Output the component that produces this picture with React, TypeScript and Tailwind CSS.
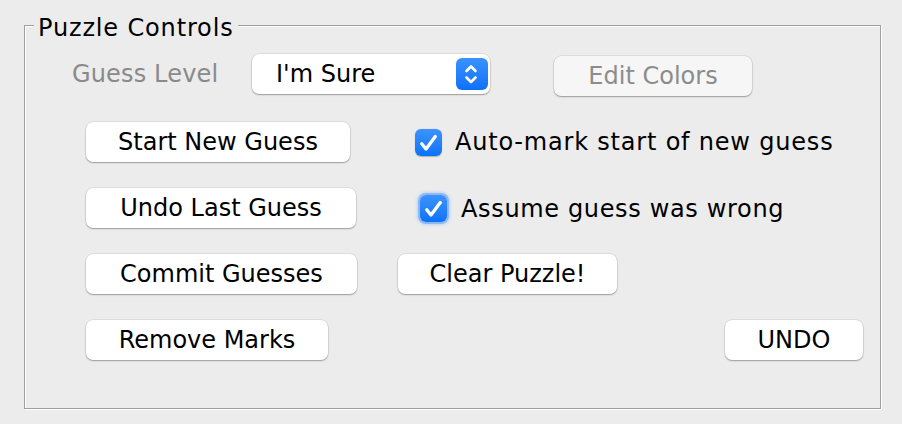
import React from "react";

const font = {fontFamily: '"DejaVu Sans", "Liberation Sans", sans-serif'};

// Aqua-style push button
const MacButton: React.FC<{label: string; className?: string; disabled?: boolean}> = ({label, className = "", disabled}) => (
    <button
        className={`h-[40px] rounded-[7px] text-[24px] leading-none flex items-center justify-center shadow-[0_1px_1.5px_rgba(0,0,0,0.3),0_0_0_0.5px_rgba(0,0,0,0.12)] ${
            disabled ? "bg-[#f6f6f6] text-[#8c8c8c] shadow-[0_0.5px_1px_rgba(0,0,0,0.15),0_0_0_0.5px_rgba(0,0,0,0.06)]" : "bg-white text-black"
        } ${className}`}
    >
        {label}
    </button>
);

const CheckBox: React.FC<{focused?: boolean}> = ({focused}) => (
    <span
        className={`w-[27px] h-[27px] rounded-[6px] bg-gradient-to-b from-[#3b93fd] to-[#0a72f8] flex items-center justify-center shrink-0 ${
            focused ? "shadow-[0_0_0_2px_rgba(98,160,250,0.55),0_0_3px_3px_rgba(98,160,250,0.35)]" : "shadow-[0_0.5px_1px_rgba(0,0,0,0.25)]"
        }`}
    >
        <svg width="27" height="27" viewBox="0 0 27 27">
            <path d="M6.8 14.8 L11 20 L20.3 7.6" fill="none" stroke="white" strokeWidth="3.3" strokeLinecap="round" strokeLinejoin="round"/>
        </svg>
    </span>
);

export default function App() {
    return (
        <div className="w-[902px] h-[424px] bg-[#ececec] pt-[25px] pl-[24px]" style={font}>
            <div className="relative w-[857px] h-[384px] border border-[#9f9f9f] shadow-[inset_1px_1px_0_#ffffff,1px_1px_0_#ffffff]">
                {/* titled border legend */}
                <span className="absolute left-[9px] top-[-12px] px-[4px] bg-[#ececec] text-[24px] leading-[28px] tracking-[0.85px] text-black">
                    Puzzle Controls
                </span>

                <div className="flex flex-col pt-[28px] pl-[61px] pr-[17px]">
                    {/* guess level row */}
                    <div className="flex items-start h-[40px]">
                        <span className="ml-[-14px] w-[180px] h-[40px] flex items-center text-[24px] tracking-[0.15px] text-[#8a8a8a]">Guess Level</span>
                        <div className="w-[238px] h-[40px] rounded-[7px] bg-white shadow-[0_1px_1.5px_rgba(0,0,0,0.3),0_0_0_0.5px_rgba(0,0,0,0.12)] flex items-center justify-between pl-[24px] pr-[2px]">
                            <span className="text-[24px] text-black">I'm Sure</span>
                            <span className="w-[32px] h-[32px] rounded-[6px] bg-gradient-to-b from-[#3a92fd] to-[#0b71f8] flex items-center justify-center">
                                <svg width="32" height="32" viewBox="0 0 32 32">
                                    <path d="M10.5 13 L15 8.5 L19.5 13" fill="none" stroke="white" strokeWidth="2.6" strokeLinecap="round" strokeLinejoin="round"/>
                                    <path d="M10.5 19.5 L15 24 L19.5 19.5" fill="none" stroke="white" strokeWidth="2.6" strokeLinecap="round" strokeLinejoin="round"/>
                                </svg>
                            </span>
                        </div>
                        <MacButton label="Edit Colors" disabled className="ml-[64px] mt-[2px] w-[198px]"/>
                    </div>

                    <div className="flex items-center mt-[28px] h-[39px]">
                        <MacButton label="Start New Guess" className="w-[264px] h-[39px]"/>
                        <div className="ml-[65px] flex items-center gap-[13px] mt-[1px]">
                            <CheckBox/>
                            <span className="text-[24px] tracking-[0.8px] text-black">Auto-mark start of new guess</span>
                        </div>
                    </div>

                    <div className="flex items-center mt-[27px] h-[39px]">
                        <MacButton label="Undo Last Guess" className="w-[270px] h-[39px]"/>
                        <div className="ml-[64px] flex items-center gap-[14px] mt-[2px]">
                            <CheckBox focused/>
                            <span className="text-[24px] tracking-[0.65px] text-black">Assume guess was wrong</span>
                        </div>
                    </div>

                    <div className="flex items-center mt-[27px] h-[39px]">
                        <MacButton label="Commit Guesses" className="w-[271px] h-[39px]"/>
                        <MacButton label="Clear Puzzle!" className="ml-[41px] w-[219px] h-[39px]"/>
                    </div>

                    <div className="flex items-center justify-between mt-[27px] h-[39px]">
                        <MacButton label="Remove Marks" className="w-[242px] h-[39px]"/>
                        <MacButton label="UNDO" className="w-[138px] h-[39px]"/>
                    </div>
                </div>
            </div>
        </div>
    );
}
